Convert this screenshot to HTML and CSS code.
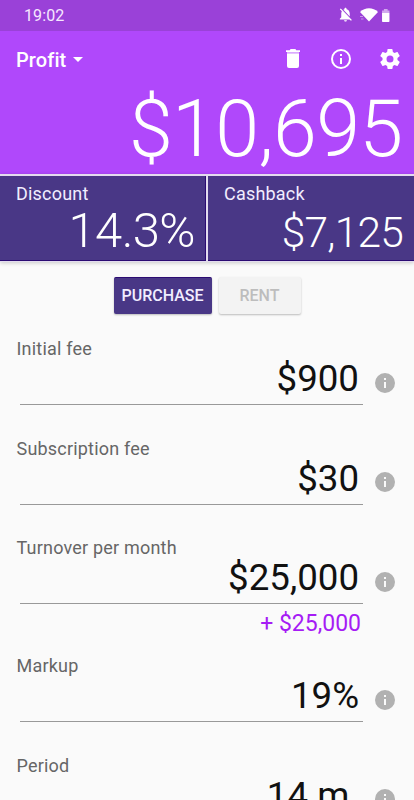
FILE: index.html
```html
<!DOCTYPE html>
<html lang="en">
<head>
<meta charset="utf-8">
<meta name="viewport" content="width=device-width, initial-scale=1">
<title>Profit</title>
<link rel="stylesheet" href="styles.css">
</head>
<body>
<svg class="defs" width="0" height="0" aria-hidden="true">
  <symbol id="info" viewBox="0 0 24 24"><path d="M12 2a10 10 0 1 0 0 20 10 10 0 0 0 0-20zm1 15h-2v-6h2zm0-8h-2V7h2z"/></symbol>
</svg>
<div class="status">
  <span class="clock">19:02</span>
  <svg class="bell" viewBox="0 0 24 24"><path d="M20 18.69 7.84 6.14 5.27 3.49 4 4.76l2.8 2.8v.01c-.52.99-.8 2.16-.8 3.42v5l-2 2v1h13.73l2 2L21 19.72zM12 22c1.11 0 2-.89 2-2h-4c0 1.11.89 2 2 2zm6-7.32V11c0-3.08-1.64-5.64-4.5-6.32V4c0-.83-.67-1.5-1.5-1.5s-1.5.67-1.5 1.5v.68c-.15.03-.29.08-.42.12-.1.03-.2.07-.3.11h-.01c-.01 0-.01 0-.02.01-.23.09-.46.2-.68.31 0 0-.01 0-.01.01z"/></svg>
  <svg class="wifi" viewBox="0 0 18 14"><path d="M0 4C5-.9 13-.9 18 4L9 13.6z"/><path opacity=".45" d="M0 8h3v1H0zM1 10.5h2.5v1H1z"/></svg>
  <svg class="battery" viewBox="0 0 8 14"><path opacity=".55" d="M0 1.5h2V0h4v1.5h2V4H0z"/><path d="M0 4h8v9.2a.8.8 0 0 1-.8.8H.8a.8.8 0 0 1-.8-.8z"/></svg>
</div>
<header class="hero">
  <div class="toolbar">
    <span class="title">Profit</span><span class="caret"></span>
    <svg class="tool trash" viewBox="0 0 14 19"><path d="M0 1.3h3.7L4.6 0h4.8l.9 1.3H14v1.8H0z"/><path opacity=".6" d="M1 3.1h12v1.5H1z"/><path d="M1 4.6h12V17a2 2 0 0 1-2 2H3a2 2 0 0 1-2-2z"/></svg>
    <svg class="tool" viewBox="0 0 24 24"><path d="M11 7h2v2h-2zm0 4h2v6h-2zm1-9a10 10 0 1 0 0 20 10 10 0 0 0 0-20zm0 18a8 8 0 1 1 0-16 8 8 0 0 1 0 16z"/></svg>
    <svg class="tool" viewBox="0 0 24 24"><path d="M19.43 12.98c.04-.32.07-.64.07-.98s-.03-.66-.07-.98l2.11-1.65c.19-.15.24-.42.12-.64l-2-3.46c-.12-.22-.39-.3-.61-.22l-2.49 1c-.52-.4-1.08-.73-1.69-.98l-.38-2.65A.49.49 0 0 0 14 2h-4c-.25 0-.46.18-.49.42l-.38 2.65c-.61.25-1.17.59-1.69.98l-2.49-1c-.23-.09-.49 0-.61.22l-2 3.46c-.13.22-.07.49.12.64l2.11 1.65c-.04.32-.07.65-.07.98s.03.66.07.98l-2.11 1.65c-.19.15-.24.42-.12.64l2 3.46c.12.22.39.3.61.22l2.49-1c.52.4 1.08.73 1.69.98l.38 2.65c.03.24.24.42.49.42h4c.25 0 .46-.18.49-.42l.38-2.65c.61-.25 1.17-.59 1.69-.98l2.49 1c.23.09.49 0 .61-.22l2-3.46c.12-.22.07-.49-.12-.64zM12 15.5a3.5 3.5 0 1 1 0-7 3.5 3.5 0 0 1 0 7z"/></svg>
  </div>
  <div class="total">$10,695</div>
</header>
<section class="stats">
  <div class="stat"><div class="stat-label">Discount</div><div class="stat-value percent">14.3%</div></div>
  <div class="stat"><div class="stat-label">Cashback</div><div class="stat-value money">$7,125</div></div>
</section>
<nav class="modes">
  <button class="mode active">PURCHASE</button>
  <button class="mode">RENT</button>
</nav>
<main class="fields">
  <div class="field"><div class="label">Initial fee</div><div class="row"><div class="value">$900</div><svg class="hint"><use href="#info"/></svg></div></div>
  <div class="field"><div class="label">Subscription fee</div><div class="row"><div class="value">$30</div><svg class="hint"><use href="#info"/></svg></div></div>
  <div class="field"><div class="label">Turnover per month</div><div class="row"><div class="value">$25,000</div><svg class="hint"><use href="#info"/></svg></div><div class="extra">+ $25,000</div></div>
  <div class="field"><div class="label">Markup</div><div class="row"><div class="value">19%</div><svg class="hint"><use href="#info"/></svg></div></div>
  <div class="field"><div class="label">Period</div><div class="row"><div class="value">14 m.</div><svg class="hint"><use href="#info"/></svg></div></div>
</main>
</body>
</html>
```
FILE: styles.css
```css
* { box-sizing: border-box; }
body {
  margin: 0;
  height: 800px;
  overflow: hidden;
  background: #fafafa;
  font-family: Roboto, sans-serif;
  color: #111;
}
svg { display: block; fill: #fff; flex: none; }
.defs { position: absolute; }

.status {
  display: flex;
  align-items: center;
  height: 31px;
  padding: 0 24.5px 0 24px;
  background: #9a41d8;
  color: #f6e8ff;
}
.clock { flex: 1; font-size: 16px; line-height: 32px; letter-spacing: 0.1px; }
.bell { width: 17px; height: 17px; margin: 0 5.5px 2px 0; }
.wifi { width: 18px; height: 14px; margin: 0 4.5px 1px 0; }
.battery { width: 7.5px; height: 13px; }

.hero { height: 143px; background: #b048fb; color: #fff; }
.toolbar {
  display: flex;
  align-items: center;
  height: 55px;
  padding: 0 12.5px 0 16px;
}
.title { font-size: 20px; font-weight: 500; line-height: 24px; padding-top: 3px; letter-spacing: 0.1px; }
.caret {
  margin: 2px auto 0 7px;
  border: 5px solid transparent;
  border-top-color: #fff;
  border-bottom: 0;
}
.tool { width: 24px; height: 24px; margin-left: 24.5px; }
.tool.trash { width: 14px; height: 19px; margin-right: 5px; }
.total {
  font-size: 79px;
  font-weight: 300;
  line-height: 80px;
  letter-spacing: -0.65px;
  text-align: right;
  padding: 3px 11.5px 0 0;
}

.stats {
  display: grid;
  grid-template-columns: 206px 206px;
  gap: 2px;
  height: 88px;
  padding: 2px 0 1px;
  background: #e3dcee;
  box-shadow: 0 1px 4px rgba(0, 0, 0, .2);
}
.stat {
  height: 85px;
  padding: 7px 10px 0 16px;
  background: #493786;
  border: solid #2b0b72;
  border-width: 0 1px 1px 0;
  color: #fff;
}
.stat:last-child { border-right: 0; padding-right: 11px; }
.stat-label { font-size: 18px; line-height: 21px; letter-spacing: 0.2px; color: #f1edff; }
.stat-value { font-weight: 300; text-align: right; line-height: 54px; }
.percent { font-size: 49px; letter-spacing: -0.6px; }
.money { font-size: 42.5px; letter-spacing: -0.8px; line-height: 58px; }

.modes { display: flex; justify-content: center; gap: 7px; padding-top: 15px; }
.mode {
  width: 82px;
  height: 37px;
  padding: 0;
  border: 0;
  border-radius: 2px;
  background: #f3f3f3;
  color: #bdbdbd;
  font: 500 16px/38px Roboto, sans-serif;
  box-shadow: 0 1px 2px rgba(0, 0, 0, .25);
}
.mode.active { width: 98px; background: #493786; color: #f1edff; border-top: 1px solid #2b0b72; line-height: 36px; }

.fields { padding: 24px 16px 0; }
.field { height: 99.5px; }
.label { font-size: 18px; line-height: 22px; letter-spacing: 0.2px; padding-left: 0.5px; color: #666; }
.row { display: flex; height: 45px; }
.value {
  width: 343px;
  margin: 0 12px 0 4px;
  padding-right: 4px;
  border-bottom: 1px solid #999;
  font-size: 36.7px;
  line-height: 37px;
  text-align: right;
}
.hint { width: 24px; height: 24px; margin-top: 10.5px; margin-left: -2px; fill: #b1b1b1; }
.extra {
  padding: 6px 37px 0 0;
  font-size: 23px;
  line-height: 27px;
  text-align: right;
  color: #a61cf5;
}
.field:has(.extra) { height: 118.3px; }
```
